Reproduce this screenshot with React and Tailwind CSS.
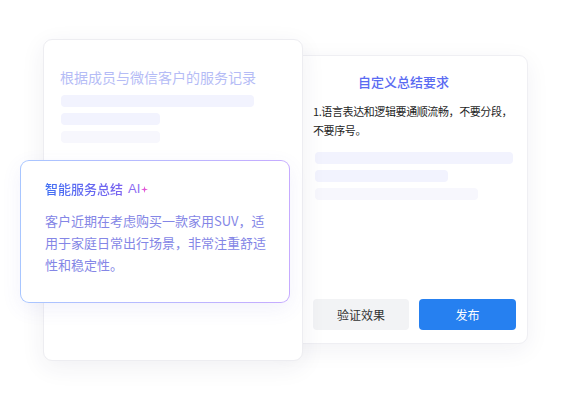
import React from 'react';

const font = { fontFamily: '"Noto Sans CJK SC", "Noto Sans", sans-serif' };

const Bar = ({ w, light }) => (
  <div className={`h-[12px] rounded-[4px] ${light ? 'bg-[#f7f7fd]' : 'bg-[#f2f3fe]'}`} style={{ width: w }} />
);

const Sparkle = () => (
  <svg width="7" height="7" viewBox="0 0 10 10" className="ml-[1px] mt-[1px]">
    <path d="M5 0 L6 4 L10 5 L6 6 L5 10 L4 6 L0 5 L4 4 Z" fill="#e255d6" />
  </svg>
);

export default function App() {
  return (
    <div className="relative w-[570px] h-[400px] bg-white overflow-hidden" style={font}>
      {/* right card: custom summary */}
      <div className="absolute left-[274px] top-[55px] w-[254px] h-[289px] bg-white rounded-[9px] border border-[#efeff3] shadow-[0_6px_24px_rgba(40,40,90,0.06)] flex flex-col pl-[38px] pr-[11px]">
        <div className="pt-[15px] pl-[45px] text-[13px] leading-[22px] font-medium text-[#5a6bf2]">自定义总结要求</div>
        <div className="mt-[9px] text-[11px] leading-[19px] tracking-[-0.4px] whitespace-nowrap text-[#1f1f1f]">
          1.语言表达和逻辑要通顺流畅，不要分段，<br />不要序号。
        </div>
        <div className="mt-[12px] flex flex-col gap-[6px] pl-[2px]">
          <Bar w={198} />
          <Bar w={133} />
          <Bar w={163} light />
        </div>
        <div className="mt-auto mb-[13px] flex gap-[10px]">
          <div className="w-[97px] h-[31px] rounded-[4px] bg-[#f2f3f5] flex items-center justify-center text-[12px] text-[#333]">验证效果</div>
          <div className="w-[98px] h-[31px] rounded-[4px] bg-[#2680f0] flex items-center justify-center text-[12px] text-white">发布</div>
        </div>
      </div>

      {/* left card: service records */}
      <div className="absolute left-[43px] top-[39px] w-[260px] h-[322px] bg-white rounded-[9px] border border-[#ededf1] shadow-[0_6px_24px_rgba(40,40,90,0.07)] pl-[16px] pt-[26px]">
        <div className="text-[14px] leading-[22px] text-[#b5bcf6]">根据成员与微信客户的服务记录</div>
        <div className="mt-[7px] pl-px flex flex-col gap-[6px]">
          <Bar w={193} />
          <Bar w={99} />
          <Bar w={99} light />
        </div>
      </div>

      {/* floating AI summary card */}
      <div className="absolute left-[20px] top-[160px] w-[270px] h-[143px] rounded-[9px] p-px bg-gradient-to-r from-[#a8c6ff] to-[#c6abff] shadow-[0_6px_20px_rgba(90,90,200,0.08)]">
        <div className="w-full h-full rounded-[8px] bg-white pl-[24px] pt-[18px]">
          <div className="flex items-center text-[13px] leading-[20px] font-medium">
            <span className="bg-gradient-to-r from-[#3d6ef3] to-[#7a62f0] bg-clip-text text-transparent">智能服务总结</span>
            <span className="ml-[5px] font-normal text-[#8b6cf2]" style={{ fontFamily: '"Liberation Sans", sans-serif' }}>AI</span>
            <Sparkle />
          </div>
          <div className="mt-[11px] w-[230px] text-[13px] leading-[22px] text-[#8486e6]">
            客户近期在考虑购买一款家用SUV，适用于家庭日常出行场景，非常注重舒适性和稳定性。
          </div>
        </div>
      </div>
    </div>
  );
}
